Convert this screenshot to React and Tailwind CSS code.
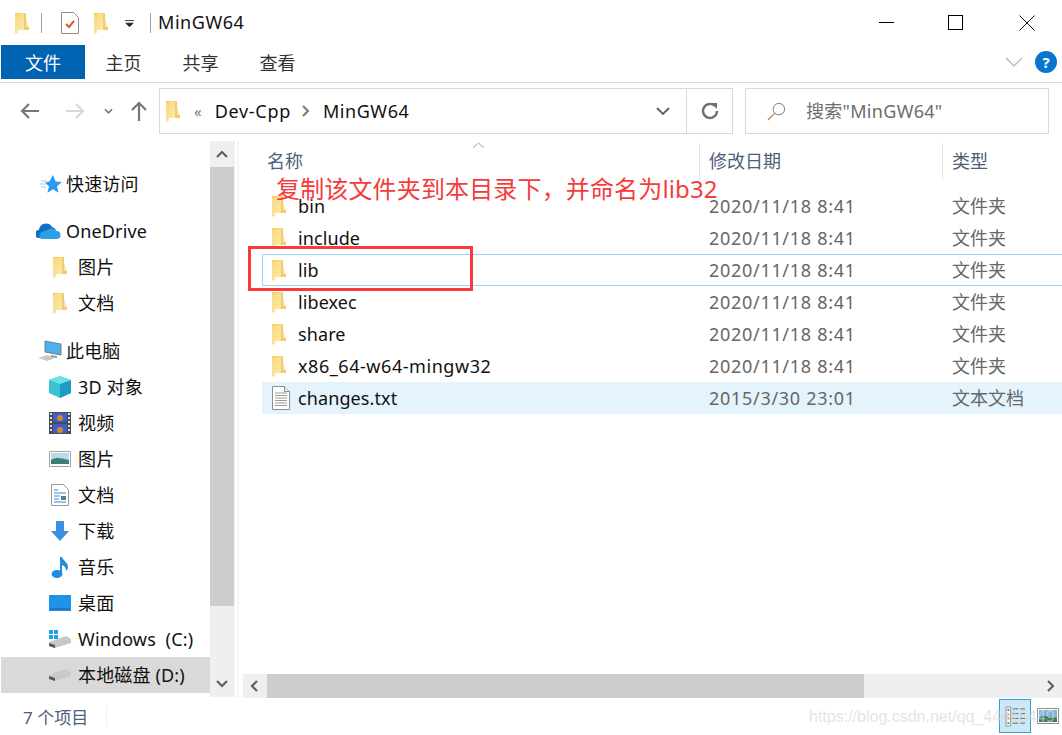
const FONT = "font-['Noto_Sans','Noto_Sans_CJK_SC',sans-serif]";

const FILES = [
  { name: "bin", date: "2020/11/18 8:41", type: "文件夹" },
  { name: "include", date: "2020/11/18 8:41", type: "文件夹" },
  { name: "lib", date: "2020/11/18 8:41", type: "文件夹", focus: true },
  { name: "libexec", date: "2020/11/18 8:41", type: "文件夹" },
  { name: "share", date: "2020/11/18 8:41", type: "文件夹" },
  { name: "x86_64-w64-mingw32", date: "2020/11/18 8:41", type: "文件夹", wide: true },
  { name: "changes.txt", date: "2015/3/30 23:01", type: "文本文档", doc: true, selected: true },
];

function Folder({ className = "w-[15px] h-[22px]" }) {
  return (
    <svg viewBox="0 0 15 22" className={className}>
      <defs>
        <linearGradient id="fold" x1="0" x2="1" y1="0" y2="1">
          <stop offset="0" stopColor="#f7d87c" />
          <stop offset="1" stopColor="#fdeeb8" />
        </linearGradient>
      </defs>
      <path d="M0 1h10v16H0z" fill="#f4cd62" />
      <path d="M0 3l9-2v2h1l4 13v2H3v3l-3 1z" fill="url(#fold)" />
      <path d="M9 1h2v14h3v3H9z" fill="#f1cb6e" />
    </svg>
  );
}

function TextDoc() {
  return (
    <svg viewBox="0 0 18 24" className="w-[18px] h-6">
      <path d="M.5.5h12l5 5v18H.5z" fill="#fff" stroke="#8d8d8d" />
      <path d="M12.500.5v5h5" fill="#eee" stroke="#8d8d8d" />
      <path d="M3 7h12M3 9.500h12M3 12h12M3 14.500h12M3 17h12M3 19.500h12" stroke="#9a9a9a" />
    </svg>
  );
}

const icon = {
  star: (
    <svg viewBox="0 0 22 22" className="w-[22px] h-[22px]">
      <path d="M13 2l2.600 6.400 6.400.5-5 4.300 1.600 6.600L13 16.200l-5.600 3.600 1.600-6.600-4-3.400 4.600-1.500z" fill="#2b9af0" />
      <path d="M1 8h6M0 11h5M1 14h5" stroke="#9ccff5" strokeWidth="1" />
    </svg>
  ),
  cloud: (
    <svg viewBox="0 0 26 18" className="w-[26px] h-[18px]">
      <path d="M3 16a4 4 0 0 1 0-8 7 7 0 0 1 13-3 6 6 0 0 1 4 3l-8 8z" fill="#0f6fc6" />
      <path d="M5 17a4 4 0 0 1 1-7l5-2a6 6 0 0 1 9 1 4 4 0 0 1 1 8z" fill="#2f9fe8" />
    </svg>
  ),
  pc: (
    <svg viewBox="0 0 25 22" className="w-[25px] h-[22px]">
      <path d="M8 1l16 3v11L8 12z" fill="#4fb1ec" stroke="#5d6d78" strokeWidth=".8" />
      <path d="M1 18l9-3 8 3-8 3z" fill="#c9c9c9" />
      <path d="M14 15l6 1v2l-6-1z" fill="#9b9b9b" />
    </svg>
  ),
  cube: (
    <svg viewBox="0 0 22 22" className="w-[22px] h-[22px]">
      <path d="M11 0l11 4v13l-11 5-11-5V4z" fill="#38c2d4" />
      <path d="M11 8l11-4v13l-11 5z" fill="#1c9cc0" />
      <path d="M11 0l11 4-11 4L0 4z" fill="#6ee0e6" />
    </svg>
  ),
  film: (
    <svg viewBox="0 0 22 22" className="w-[22px] h-[22px]">
      <path d="M0 0h22v22H0z" fill="#4b4b4b" />
      <path d="M4 1h14v9H4z" fill="#3a5fd0" />
      <path d="M4 12h14v9H4z" fill="#3a5fd0" />
      <circle cx="11" cy="6" r="3" fill="#d8862c" />
      <circle cx="11" cy="18" r="3" fill="#d8862c" />
      <path d="M1 2h2M1 6h2M1 10h2M1 14h2M1 18h2M19 2h2M19 6h2M19 10h2M19 14h2M19 18h2" stroke="#ddd" strokeWidth="2" />
    </svg>
  ),
  picture: (
    <svg viewBox="0 0 22 16" className="w-[22px] h-4">
      <path d="M.5.5h21v15H.5z" fill="#fff" stroke="#a4a4a4" />
      <path d="M2 2h18v11H2z" fill="#b9dcec" />
      <path d="M2 9c5-3 9-2 18 0v4H2z" fill="#3f7d76" />
    </svg>
  ),
  docs: (
    <svg viewBox="0 0 18 22" className="w-[18px] h-[22px]">
      <path d="M.5.5h12l5 5v16H.5z" fill="#fff" stroke="#9a9a9a" />
      <path d="M3 6h4M3 9h12M3 12h6M3 15h5M3 18h12" stroke="#3b8ad6" />
      <path d="M10 12h5v4h-5z" fill="#54808c" />
    </svg>
  ),
  down: (
    <svg viewBox="0 0 20 20" className="w-5 h-5">
      <path d="M6 0h8v10h5l-9 10-9-10h5z" fill="#3b8fdf" />
    </svg>
  ),
  music: (
    <svg viewBox="0 0 18 22" className="w-[18px] h-[22px]">
      <ellipse cx="6" cy="18" rx="5.500" ry="4" fill="#1c8fe0" />
      <path d="M9 1h2c1 4 6 5 6 10 0 2-1 3-2 4 0-4-2-5-4-6v9H9z" fill="#1c8fe0" />
    </svg>
  ),
  desktop: (
    <svg viewBox="0 0 22 16" className="w-[22px] h-4">
      <path d="M0 0h22v16H0z" fill="#1f93ea" />
      <path d="M1 14h20" stroke="#0b5da8" />
    </svg>
  ),
  winDrive: (
    <svg viewBox="0 0 23 18" className="w-[23px] h-[18px]">
      <path d="M0 0h4v4H0zM5 0h4v4H5zM0 5h4v4H0zM5 5h4v4H5z" fill="#14a7ea" />
      <path d="M0 12l17-6 5 3v4L6 18l-6-2z" fill="#c7c7c7" />
      <path d="M0 13l6 2v3l-6-2z" fill="#555" />
    </svg>
  ),
  drive: (
    <svg viewBox="0 0 23 12" className="w-[23px] h-3">
      <path d="M0 6l17-6 5 3v4L6 12l-6-2z" fill="#c9c9c9" />
      <path d="M0 7l6 2v3l-6-2z" fill="#555" />
    </svg>
  ),
};

const NAV = [
  { label: "快速访问", icon: icon.star, top: true },
  { label: "OneDrive", icon: icon.cloud, top: true, gap: "mt-[11px]" },
  { label: "图片", folder: true },
  { label: "文档", folder: true },
  { label: "此电脑", icon: icon.pc, top: true, gap: "mt-[12px]" },
  { label: "3D 对象", icon: icon.cube },
  { label: "视频", icon: icon.film },
  { label: "图片", icon: icon.picture },
  { label: "文档", icon: icon.docs },
  { label: "下载", icon: icon.down },
  { label: "音乐", icon: icon.music },
  { label: "桌面", icon: icon.desktop },
  { label: "Windows  (C:)", icon: icon.winDrive },
  { label: "本地磁盘 (D:)", icon: icon.drive, active: true },
];

function NavRow({ item }) {
  return (
    <div
      className={`flex h-9 shrink-0 items-center text-[18px] text-[#111] whitespace-pre ${item.gap || ""} ${item.active ? "bg-[#d9d9d9]" : ""}`}
    >
      {item.top ? (
        <div className="flex w-[64px] justify-end pr-[3px]">{item.icon}</div>
      ) : (
        <div className="flex w-[76px] justify-center pl-[47px] pr-[5px]">
          {item.folder ? <Folder /> : item.icon}
        </div>
      )}
      <span className="ml-[1px] tracking-[.15px]">{item.label}</span>
    </div>
  );
}

function Chevron({ d, className = "w-3 h-3" }) {
  return (
    <svg viewBox="0 0 12 12" className={className}>
      <path d={d} fill="none" stroke="#606060" strokeWidth="2.200" />
    </svg>
  );
}

export default function App() {
  return (
    <div className={`${FONT} relative flex h-[735px] w-[1062px] flex-col overflow-hidden bg-white`}>
      {/* title bar */}
      <div className="flex h-[45px] shrink-0 items-center pl-[15px]">
        <Folder className="w-[15px] h-[22px]" />
        <div className="ml-[11px] h-[20px] w-px bg-[#a0a0a0]" />
        <svg viewBox="0 0 18 22" className="ml-[19px] w-[18px] h-[22px]">
          <path d="M.5.5h12l5 5v16H.5z" fill="#fff" stroke="#8f8f8f" />
          <path d="M5 12l3 3 5-6" fill="none" stroke="#e2572a" strokeWidth="2" />
        </svg>
        <Folder className="ml-[15px] w-[15px] h-[22px]" />
        <svg viewBox="0 0 10 9" className="ml-[16px] mt-[4px] w-[9px] h-[9px]">
          <path d="M0 0h10M1 3h8l-4 4z" stroke="#222" fill="#222" />
        </svg>
        <div className="ml-[16px] h-[20px] w-px bg-[#a0a0a0]" />
        <span className="ml-[7px] text-[18px] tracking-[.55px] text-[#111]">MinGW64</span>
        <div className="ml-auto flex items-center">
          <div className="h-px w-[15px] bg-black" />
          <div className="ml-[54px] h-[15px] w-[15px] border border-black" />
          <svg viewBox="0 0 16 16" className="ml-[56px] mr-[27px] w-4 h-4">
            <path d="M.5.500l15 15M15.500.500l-15 15" stroke="#111" />
          </svg>
        </div>
      </div>

      {/* ribbon tabs */}
      <div className="flex h-[38px] shrink-0 items-start border-b-[1px] border-[#dadada] pl-px">
        <div className="flex h-[34px] w-[84px] items-center justify-center bg-[#0063b1] pt-[2px] text-[18px] text-white">文件</div>
        <div className="flex h-[34px] w-[77px] items-center justify-center pt-[2px] text-[18px] text-[#333]">主页</div>
        <div className="flex h-[34px] w-[77px] items-center justify-center pt-[2px] text-[18px] text-[#333]">共享</div>
        <div className="flex h-[34px] w-[77px] items-center justify-center pt-[2px] text-[18px] text-[#333]">查看</div>
        <div className="ml-auto mr-[4px] flex h-[34px] items-center">
          <svg viewBox="0 0 18 10" className="w-[18px] h-[10px]">
            <path d="M1 1l8 8 8-8" fill="none" stroke="#bdbdbd" strokeWidth="1.500" />
          </svg>
          <div className="ml-[12px] mr-[1px] flex h-[22px] w-[22px] items-center justify-center rounded-full bg-[#0a74d1] text-[15px] font-bold text-white">?</div>
        </div>
      </div>

      {/* address row */}
      <div className="flex h-[58px] shrink-0 items-center pb-[2px]">
        <svg viewBox="0 0 20 16" className="ml-[20px] w-5 h-4">
          <path d="M19 8H2M9 1L2 8l7 7" fill="none" stroke="#777" strokeWidth="2.200" />
        </svg>
        <svg viewBox="0 0 20 16" className="ml-[25px] w-5 h-4">
          <path d="M1 8h17M11 1l7 7-7 7" fill="none" stroke="#d9d9d9" strokeWidth="2.200" />
        </svg>
        <svg viewBox="0 0 10 6" className="ml-[19px] w-[9px] h-[6px]">
          <path d="M1 1l4 4 4-4" fill="none" stroke="#777" strokeWidth="1.800" />
        </svg>
        <svg viewBox="0 0 16 20" className="ml-[18px] w-4 h-5">
          <path d="M8 20V2M1 9l7-7 7 7" fill="none" stroke="#777" strokeWidth="2.200" />
        </svg>
        <div className="ml-[12px] flex h-[46px] w-[574px] items-center border border-[#d9d9d9]">
          <Folder className="ml-[6px] w-[15px] h-[22px]" />
          <span className="ml-[13px] text-[15px] text-[#777]">«</span>
          <span className="ml-[13px] text-[18px] tracking-[.7px] text-[#111]">Dev-Cpp</span>
          <svg viewBox="0 0 8 12" className="ml-[11px] w-2 h-3">
            <path d="M1 1l5 5-5 5" fill="none" stroke="#777" strokeWidth="2" />
          </svg>
          <span className="ml-[13px] text-[18px] tracking-[.55px] text-[#111]">MinGW64</span>
          <svg viewBox="0 0 14 8" className="ml-auto mr-[16px] w-[14px] h-2">
            <path d="M1 1l6 6 6-6" fill="none" stroke="#606060" strokeWidth="1.800" />
          </svg>
          <div className="flex h-full w-[46px] items-center justify-center border-l border-[#d9d9d9]">
            <svg viewBox="0 0 18 18" className="w-[18px] h-[18px]">
              <path d="M14 4a7 7 0 1 0 2 5" fill="none" stroke="#707070" strokeWidth="2.400" />
              <path d="M10 1h6v6z" fill="#707070" />
            </svg>
          </div>
        </div>
        <div className="ml-[12px] flex h-[46px] w-[304px] items-center border border-[#d9d9d9]">
          <svg viewBox="0 0 20 20" className="ml-[21px] w-[19px] h-[19px]">
            <circle cx="12.500" cy="7.500" r="6" fill="none" stroke="#777" />
            <path d="M8 12l-7 7" stroke="#b5835a" strokeWidth="1.300" />
          </svg>
          <span className="ml-[20px] text-[18px] tracking-[.3px] text-[#6d6d6d]">搜索"MinGW64"</span>
        </div>
      </div>

      {/* body */}
      <div className="flex min-h-0 flex-1">
        {/* nav pane */}
        <div className="flex w-[210px] shrink-0 flex-col pl-px pt-[25px]">
          {NAV.map((item, i) => (
            <NavRow key={i} item={item} />
          ))}
        </div>

        {/* nav scrollbar */}
        <div className="flex h-[556px] w-[25px] shrink-0 flex-col bg-[#efefef] pr-px">
          <div className="flex h-[26px] shrink-0 items-center justify-center">
            <Chevron d="M1 9l5-5 5 5" />
          </div>
          <div className="h-[439px] shrink-0 bg-[#cdcdcd]" />
          <div className="mt-auto flex h-[26px] shrink-0 items-center justify-center">
            <Chevron d="M1 3l5 5 5-5" />
          </div>
        </div>
        <div className="ml-[2px] h-[556px] w-[2px] shrink-0 bg-[#f4f4f4]" />

        {/* file list */}
        <div className="flex min-w-0 flex-1 flex-col pl-[23px]">
          <div className="relative flex h-[39px] shrink-0 items-center pt-[2px] text-[18px] text-[#4c607a]">
            <svg viewBox="0 0 14 7" className="absolute left-[210px] top-[1px] w-[13px] h-[7px]">
              <path d="M1 6l6-5 6 5" fill="none" stroke="#9a9a9a" />
            </svg>
            <div className="w-[437px] shrink-0 pl-[5px]">名称</div>
            <div className="h-full w-px bg-[#e5e5e5]" />
            <div className="w-[242px] shrink-0 pl-[9px]">修改日期</div>
            <div className="h-full w-px bg-[#e5e5e5]" />
            <div className="pl-[9px]">类型</div>
          </div>
          <div className="mt-[10px] -mr-[4px] flex flex-col">
            {FILES.map((f) => (
              <div
                key={f.name}
                className={`flex h-[32px] items-center border text-[18px] ${f.focus ? "border-[#99d1ff]" : "border-transparent"} ${f.selected ? "bg-[#e5f3fd]" : ""}`}
              >
                <div className="flex w-[35px] shrink-0 pl-[9px]">
                  {f.doc ? <TextDoc /> : <Folder />}
                </div>
                <div className={`w-[411px] shrink-0 text-[#111] ${f.wide ? "tracking-[.55px]" : "tracking-[.1px]"}`}>{f.name}</div>
                <div className="w-[243px] shrink-0 tracking-[.7px] text-[#666]">{f.date}</div>
                <div className="text-[#666]">{f.type}</div>
              </div>
            ))}
          </div>
          {/* horizontal scrollbar */}
          <div className="mt-auto mb-[37px] -ml-[19px] flex h-6 shrink-0 items-center bg-[#efefef]">
            <div className="flex w-6 shrink-0 justify-center">
              <Chevron d="M8 1L3 6l5 5" />
            </div>
            <div className="h-full w-[597px] bg-[#cdcdcd]" />
            <div className="ml-auto flex w-6 justify-center">
              <Chevron d="M4 1l5 5-5 5" />
            </div>
          </div>
        </div>
      </div>

      {/* status bar overlays the bottom of the body */}
      <div className="absolute inset-x-0 bottom-0 flex h-[38px] items-center bg-transparent">
        <span className="ml-[23px] mt-[4px] text-[17px] text-[#4c607a]">7 个项目</span>
        <div className="ml-[18px] h-[20px] w-px bg-[#eeeeee]" />
        <div className="ml-auto mr-[2px] flex items-center">
          <div className="flex h-[34px] w-[32px] items-center justify-center border border-[#2ea0d8] bg-[#cbe8f6]">
            <svg viewBox="0 0 22 22" className="w-[21px] h-[21px]">
              <path d="M1 1h5v20H1z" fill="#fff" stroke="#8a8a8a" />
              <path d="M2.500 3h2v2h-2z" fill="#3a7bc8" />
              <path d="M2.500 8h2v2h-2z" fill="#c9a030" />
              <path d="M2.500 12h2v2h-2z" fill="#c24a30" />
              <path d="M2.500 17h2v2h-2z" fill="#58a040" />
              <path d="M8 3h6M16 3h5M8 8h6M16 8h5M8 13h6M16 13h5M8 18h6M16 18h5" stroke="#666" />
            </svg>
          </div>
          <svg viewBox="0 0 22 16" className="ml-[6px] mr-[1px] w-[22px] h-4">
            <path d="M.5.500h21v15H.5z" fill="#fff" stroke="#8f8f8f" />
            <path d="M2 2h18v12H2z" fill="#7db4e0" />
            <path d="M2 10c5-3 9-2 18 0v4H2z" fill="#3f7d56" />
          </svg>
        </div>
      </div>

      {/* red annotation and blog watermark painted on the screenshot */}
      <div className="absolute left-[248px] top-[246px] h-[45px] w-[225px] border-[3px] border-[#f83a3a]" />
      <div className="absolute left-[276px] top-[174px] text-[24px] leading-[30px] tracking-[.15px] text-[#f43c3c]">复制该文件夹到本目录下，并命名为lib32</div>
      <div className="absolute left-[809px] top-[705px] font-['Liberation_Sans',sans-serif] text-[16px] leading-[24px] text-[#d8d8d8]/70">https://blog.csdn.net/qq_44419449</div>
    </div>
  );
}
